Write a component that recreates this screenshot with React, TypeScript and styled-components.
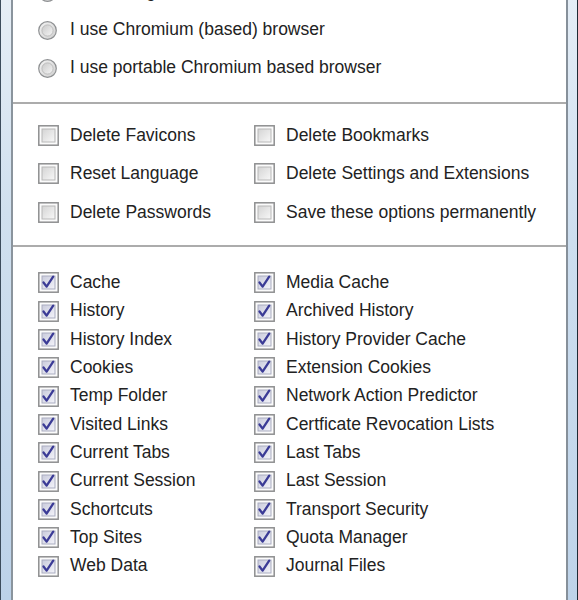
import React, { ReactElement } from 'react'
import styled, { createGlobalStyle } from 'styled-components'

const GlobalStyle = createGlobalStyle`
  html, body {
    margin: 0;
    padding: 0;
    background: #ffffff;
    overflow: hidden;
  }
`

const Window = styled.div`
  display: flex;
  width: 578px;
  height: 600px;
  overflow: hidden;
  font-family: 'Liberation Sans', Arial, sans-serif;
  font-size: 17.5px;
  color: #222222;
`

const FrameLeft = styled.div`
  width: 11px;
  flex: none;
  border-right: 2px solid #8a949d;
  background:
    linear-gradient(to right, #3c4c5c 0, #3c4c5c 1px, transparent 1px),
    linear-gradient(to bottom, #e6eef6 0%, #d0e0ef 35%, #bcd2e9 100%);
`

const FrameRight = styled.div`
  width: 10px;
  flex: none;
  border-left: 2px solid #86909a;
  background:
    linear-gradient(to left, #1f2a35 0, #1f2a35 1px, transparent 1px),
    linear-gradient(to bottom, #e4edf6 0%, #cddeef 40%, #bed3e9 100%);
`

const Content = styled.div`
  flex: 1;
  background: #ffffff;
  display: flex;
  flex-direction: column;
`

const RadioSection = styled.div`
  margin-top: -27px;
  padding: 0 0 15px 25px;
  border-bottom: 2px solid #acacac;
`

const OptionSection = styled.div`
  padding: 12px 0 13px 25px;
  border-bottom: 2px solid #acacac;
  display: grid;
  grid-template-columns: 216px 1fr;
  grid-auto-rows: 38.5px;
`

const CleanSection = styled.div`
  padding: 22px 0 0 25px;
  display: grid;
  grid-template-columns: 216px 1fr;
  grid-template-rows: repeat(11, 28.35px);
  grid-auto-flow: column;
`

const RadioRow = styled.div`
  display: flex;
  align-items: center;
  height: 38px;
  gap: 13px;
  white-space: nowrap;
`

const CheckRow = styled.div`
  display: flex;
  align-items: center;
  gap: 11px;
  white-space: nowrap;
`

const Label = styled.span`
  line-height: 1;
`

const RadioIcon = (): ReactElement => (
  <svg width="19" height="19" viewBox="0 0 19 19">
    <defs>
      <linearGradient id="rOuter" x1="0" y1="0" x2="1" y2="1">
        <stop offset="0" stopColor="#f4f4f4" />
        <stop offset="1" stopColor="#cfcfcf" />
      </linearGradient>
      <linearGradient id="rInner" x1="0" y1="0" x2="1" y2="1">
        <stop offset="0" stopColor="#c9c9c9" />
        <stop offset="1" stopColor="#f6f6f6" />
      </linearGradient>
    </defs>
    <circle cx="9.5" cy="9.5" r="8.8" fill="url(#rOuter)" stroke="#8e9092" strokeWidth="1.2" />
    <circle cx="9.5" cy="9.5" r="5.6" fill="url(#rInner)" stroke="#b4b4b4" strokeWidth="0.8" />
  </svg>
)

const CheckIcon = ({ checked }: { checked: boolean }): ReactElement => (
  <svg width="21" height="21" viewBox="0 0 21 21">
    <defs>
      <linearGradient id="cOff" x1="0" y1="0" x2="1" y2="1">
        <stop offset="0" stopColor="#d4d4d4" />
        <stop offset="1" stopColor="#f8f8f8" />
      </linearGradient>
      <linearGradient id="cOn" x1="0" y1="0" x2="1" y2="1">
        <stop offset="0" stopColor="#c9cbdc" />
        <stop offset="1" stopColor="#f4f4fa" />
      </linearGradient>
    </defs>
    <rect x="0.8" y="0.8" width="19.4" height="19.4" fill="#fbfbfb" stroke="#8e8f90" strokeWidth="1.5" />
    <rect
      x="4"
      y="4"
      width="13"
      height="13"
      fill={checked ? 'url(#cOn)' : 'url(#cOff)'}
      stroke={checked ? '#a9acc0' : '#b8b8b8'}
      strokeWidth="1"
    />
    {checked && (
      <path
        d="M5.5 10.5 L8.6 14.6 L15.2 4.6"
        fill="none"
        stroke="#3b3b96"
        strokeWidth="2.3"
        strokeLinejoin="round"
        strokeLinecap="round"
      />
    )}
  </svg>
)

const radios = [
  'I use Google Chrome browser',
  'I use Chromium (based) browser',
  'I use portable Chromium based browser',
]

const options = [
  'Delete Favicons',
  'Delete Bookmarks',
  'Reset Language',
  'Delete Settings and Extensions',
  'Delete Passwords',
  'Save these options permanently',
]

const cleanLeft = [
  'Cache',
  'History',
  'History Index',
  'Cookies',
  'Temp Folder',
  'Visited Links',
  'Current Tabs',
  'Current Session',
  'Schortcuts',
  'Top Sites',
  'Web Data',
]

const cleanRight = [
  'Media Cache',
  'Archived History',
  'History Provider Cache',
  'Extension Cookies',
  'Network Action Predictor',
  'Certficate Revocation Lists',
  'Last Tabs',
  'Last Session',
  'Transport Security',
  'Quota Manager',
  'Journal Files',
]

export default function App(): ReactElement {
  return (
    <>
      <GlobalStyle />
      <Window>
        <FrameLeft />
        <Content>
          <RadioSection>
            {radios.map((r) => (
              <RadioRow key={r}>
                <RadioIcon />
                <Label>{r}</Label>
              </RadioRow>
            ))}
          </RadioSection>
          <OptionSection>
            {options.map((o) => (
              <CheckRow key={o}>
                <CheckIcon checked={false} />
                <Label>{o}</Label>
              </CheckRow>
            ))}
          </OptionSection>
          <CleanSection>
            {[...cleanLeft, ...cleanRight].map((c) => (
              <CheckRow key={c}>
                <CheckIcon checked />
                <Label>{c}</Label>
              </CheckRow>
            ))}
          </CleanSection>
        </Content>
        <FrameRight />
      </Window>
    </>
  )
}
